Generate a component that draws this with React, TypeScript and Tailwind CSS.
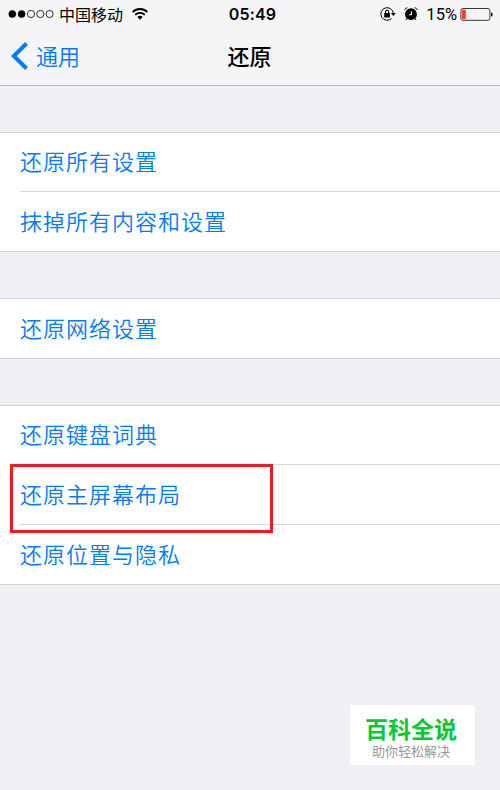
type Item = { label: string; highlighted?: boolean };

const groups: Item[][] = [
  [{ label: "还原所有设置" }, { label: "抹掉所有内容和设置" }],
  [{ label: "还原网络设置" }],
  [
    { label: "还原键盘词典" },
    { label: "还原主屏幕布局", highlighted: true },
    { label: "还原位置与隐私" },
  ],
];

const SignalDots = () => (
  <svg width="46" height="10" viewBox="0 0 46 10" stroke="#000">
    <circle cx="4.3" cy="5" r="3.5" fill="#000" strokeWidth="0.6" />
    <circle cx="13.6" cy="5" r="3.5" fill="#000" strokeWidth="0.6" />
    <circle cx="23" cy="5" r="3.6" fill="none" strokeWidth="0.8" />
    <circle cx="32.3" cy="5" r="3.6" fill="none" strokeWidth="0.8" />
    <circle cx="41.6" cy="5" r="3.6" fill="none" strokeWidth="0.8" />
  </svg>
);

const WifiIcon = () => (
  <svg width="16" height="12" viewBox="0 0 16 12" fill="none" stroke="#000" strokeWidth="1.8">
    <path d="M0.7 4a10.4 10.4 0 0 1 14.6 0" />
    <path d="M3.2 6.9a6.8 6.8 0 0 1 9.6 0" />
    <path d="M5.3 9a3.9 3.9 0 0 1 5.4 0L8 11.7Z" fill="#000" stroke="none" />
  </svg>
);

const RotationLockIcon = () => (
  <svg width="16" height="14" viewBox="0 0 16 14" fill="none" stroke="#000">
    <path d="M11.5 11.5A6.3 6.3 0 1 1 13.4 6.5" strokeWidth="1" />
    <path d="M10.9 6h4.9l-2.4 3Z" fill="#000" stroke="none" />
    <rect x="4.2" y="6.1" width="5.8" height="4.3" rx="0.4" fill="#000" stroke="none" />
    <path d="M5.5 6.4V4.9a1.6 1.6 0 0 1 3.2 0v1.5" strokeWidth="1.1" />
  </svg>
);

const AlarmIcon = () => (
  <svg width="14" height="14" viewBox="0 0 14 14" fill="none" stroke="#000">
    <circle cx="7" cy="7.2" r="5.9" fill="#000" stroke="none" />
    <path d="M0.8 3.1C1 1.8 2 0.9 3.4 0.8M13.2 3.1C13 1.8 12 0.9 10.6 0.8" strokeWidth="1" />
    <path d="M2.9 11.6 2 12.8M11.1 11.6l0.9 1.2" strokeWidth="1.1" />
    <path d="M7.4 4.2v3.5H4.9" stroke="#f5f5f7" strokeWidth="1.1" />
  </svg>
);

const BatteryIcon = () => (
  <svg width="34" height="13" viewBox="0 0 34 13">
    <rect x="0.9" y="0.5" width="29" height="11.8" rx="2" fill="none" stroke="#222" strokeWidth="0.9" />
    <rect x="2" y="1.7" width="3.8" height="9.4" fill="#ff3b30" />
    <path d="M31 4.4c2.2 0.2 2.2 3.8 0 4Z" fill="#000" />
  </svg>
);

const StatusBar = () => (
  <div className="grid h-[27px] grid-cols-[1fr_auto_1fr] items-center pl-2 pr-[6px] text-black">
    <div className="flex items-center">
      <SignalDots />
      <span className="ml-[5px] text-base leading-[25px]">中国移动</span>
      <span className="ml-[9px]">
        <WifiIcon />
      </span>
    </div>
    <span className="pl-[3px] pt-px font-[Inter] text-[16px] leading-[27px] font-semibold tracking-[0.2px]">
      05:49
    </span>
    <div className="flex items-center justify-end">
      <RotationLockIcon />
      <span className="ml-2">
        <AlarmIcon />
      </span>
      <span className="ml-2 font-[Roboto] text-[16.5px] leading-[25px]">15%</span>
      <span className="ml-[3px]">
        <BatteryIcon />
      </span>
    </div>
  </div>
);

const NavBar = () => (
  <div className="grid h-[58px] grid-cols-[1fr_auto_1fr] items-center pl-[11px] pr-3">
    <button className="flex items-center gap-2 text-[#007aff]">
      <svg width="17" height="28" viewBox="0 0 17 28" fill="none" stroke="currentColor" strokeWidth="4">
        <path d="M15.5 1.5 2.8 14l12.7 12.5" />
      </svg>
      <span className="pb-[3px] text-[22px] leading-8 font-[350]">通用</span>
    </button>
    <h1 className="pb-[3px] text-[22px] leading-8 font-medium text-black">还原</h1>
  </div>
);

const Row = ({ label, highlighted }: Item) => (
  <li className="group relative flex h-[60px] pl-5 first:h-[59px] only:h-[60px]">
    <button className="flex flex-1 items-center border-b border-[#d9d9dc] pb-[3px] text-left text-[22px] font-[350] tracking-[1px] text-[#007aff] group-last:border-transparent">
      {label}
    </button>
    {highlighted && (
      <div className="absolute -top-px left-[10px] z-10 h-[69px] w-[263px] border-3 border-[#ed1c24]" />
    )}
  </li>
);

const App = () => {
  return (
    <div className="relative h-[790px] w-[500px] overflow-hidden bg-[#efeff4] font-['Noto_Sans_CJK_SC',sans-serif]">
      <header className="h-[86px] border-b border-[#b9b9bd] bg-[#f5f5f7]">
        <StatusBar />
        <NavBar />
      </header>

      <main className="flex flex-col gap-[46px] pt-[46px]">
        {groups.map((items) => (
          <ul key={items[0].label} className="border-t border-[#d4d4d8] bg-white shadow-[inset_0_-1px_#d4d4d8]">
            {items.map((item) => (
              <Row key={item.label} {...item} />
            ))}
          </ul>
        ))}
      </main>

      {/* WATERMARK */}
      <div className="absolute top-[705px] left-[350px] flex h-[60px] w-[125px] flex-col items-center bg-white pt-[7px] pr-[3px]">
        <span className="text-[23px] leading-8 font-bold text-[#00cb30]">百科全说</span>
        <span className="text-[13px] leading-[14px] text-[#999]">助你轻松解决</span>
      </div>
    </div>
  );
};

export default App;
